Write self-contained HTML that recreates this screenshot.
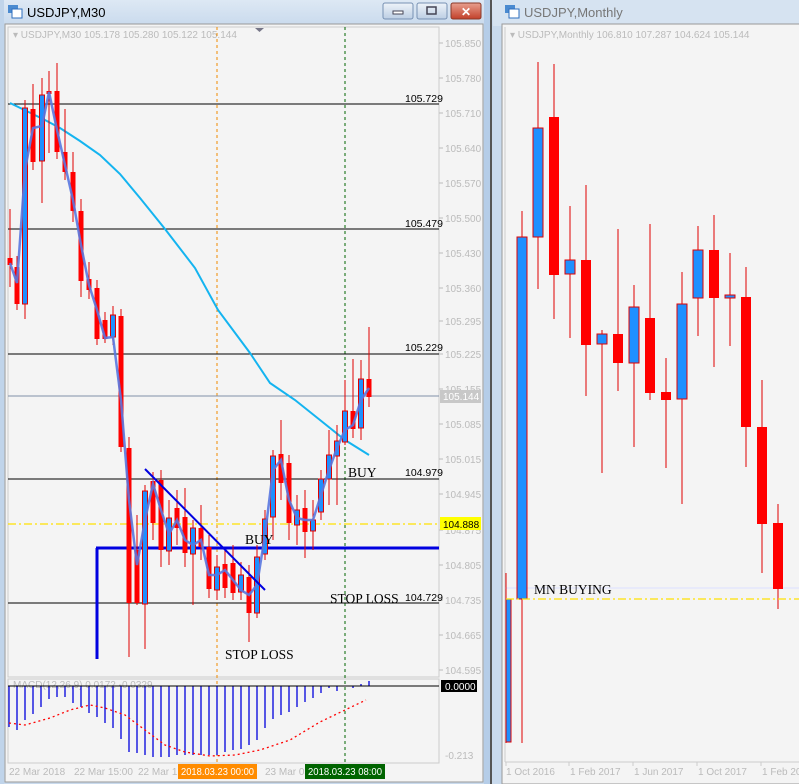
<!DOCTYPE html>
<html><head><meta charset="utf-8"><style>
html,body{margin:0;padding:0;background:#f4f4f4;overflow:hidden}
svg{display:block;font-family:"Liberation Sans",sans-serif}
</style></head><body>
<svg width="799" height="784" viewBox="0 0 799 784" xmlns="http://www.w3.org/2000/svg">
<defs>
<linearGradient id="tb" x1="0" y1="0" x2="0" y2="1"><stop offset="0" stop-color="#dde8f4"/><stop offset="1" stop-color="#c9daed"/></linearGradient>
<linearGradient id="bt" x1="0" y1="0" x2="0" y2="1"><stop offset="0" stop-color="#eef3f9"/><stop offset="1" stop-color="#bccee4"/></linearGradient>
<linearGradient id="rb" x1="0" y1="0" x2="0" y2="1"><stop offset="0" stop-color="#e8a08f"/><stop offset="1" stop-color="#c2402a"/></linearGradient>
</defs>
<rect x="0" y="0" width="799" height="784" fill="#c9daed"/>
<rect x="0" y="0" width="493" height="26" fill="url(#tb)"/>
<rect x="493" y="0" width="306" height="26" fill="#d6e3f1"/>
<rect x="490" y="0" width="2" height="784" fill="#555"/>
<rect x="484" y="0" width="6" height="784" fill="#b5cde8"/>
<rect x="0" y="0" width="4" height="784" fill="#c0d4ea"/>
<g><rect x="8" y="5" width="10" height="8" fill="#4a8ad0"/><rect x="12" y="9" width="10" height="9" fill="#fff" stroke="#2e6fbf"/></g>
<text x="27" y="17" font-size="13" fill="#000">USDJPY,M30</text>
<rect x="383" y="3" width="30" height="16" rx="2" fill="url(#bt)" stroke="#7791b3"/>
<rect x="393" y="11" width="10" height="3" fill="#fff" stroke="#445"/>
<rect x="417" y="3" width="30" height="16" rx="2" fill="url(#bt)" stroke="#7791b3"/>
<rect x="427" y="7" width="9" height="7" fill="none" stroke="#445" stroke-width="1.5"/>
<rect x="451" y="3" width="30" height="16" rx="2" fill="url(#rb)" stroke="#8a3a2a"/>
<text x="466" y="16" font-size="12" font-weight="bold" fill="#fff" text-anchor="middle">✕</text>
<rect x="5" y="24" width="478" height="758" fill="#f4f4f4" stroke="#999"/>
<rect x="8" y="27" width="431" height="650" fill="none" stroke="#ccc"/>
<rect x="8" y="679" width="431" height="84" fill="none" stroke="#ccc"/>
<text x="13" y="38" font-size="10" fill="#bbb">▾ USDJPY,M30  105.178 105.280 105.122 105.144</text>
<path d="M255 28 h9 l-4.5 4z" fill="#778"/>
<g font-size="10" fill="#bbb">
<text x="445" y="47">105.850</text><text x="445" y="82">105.780</text><text x="445" y="117">105.710</text><text x="445" y="152">105.640</text><text x="445" y="187">105.570</text><text x="445" y="222">105.500</text><text x="445" y="257">105.430</text><text x="445" y="292">105.360</text><text x="445" y="325">105.295</text><text x="445" y="358">105.225</text><text x="445" y="393">105.155</text><text x="445" y="428">105.085</text><text x="445" y="463">105.015</text><text x="445" y="498">104.945</text><text x="445" y="534">104.875</text><text x="445" y="569">104.805</text><text x="445" y="604">104.735</text><text x="445" y="639">104.665</text><text x="445" y="674">104.595</text>
<text x="445" y="759">-0.213</text>
</g>
<g stroke="#bbb"><path d="M439 43h4M439 78h4M439 113h4M439 148h4M439 183h4M439 218h4M439 253h4M439 288h4M439 321h4M439 354h4M439 389h4M439 424h4M439 459h4M439 494h4M439 530h4M439 565h4M439 600h4M439 635h4M439 670h4"/></g>
<line x1="217" y1="27" x2="217" y2="763" stroke="#f08a00" stroke-dasharray="3,3"/>
<line x1="345" y1="27" x2="345" y2="763" stroke="#006400" stroke-dasharray="3,3"/>
<g stroke="#000" stroke-width="1"><line x1="8" y1="104" x2="439" y2="104"/><line x1="8" y1="229" x2="439" y2="229"/><line x1="8" y1="354" x2="439" y2="354"/><line x1="8" y1="479" x2="439" y2="479"/><line x1="8" y1="603" x2="439" y2="603"/></g>
<g font-size="10.5" fill="#000"><text x="405" y="102">105.729</text><text x="405" y="227">105.479</text><text x="405" y="351">105.229</text><text x="405" y="476">104.979</text><text x="405" y="601">104.729</text></g>
<line x1="8" y1="396" x2="439" y2="396" stroke="#8090a8"/>
<rect x="440" y="390" width="41" height="13" fill="#c8c8c8"/><text x="443" y="400" font-size="10" fill="#fff">105.144</text>
<line x1="8" y1="524" x2="439" y2="524" stroke="#ffe000" stroke-width="1.3" stroke-dasharray="8,3,2,3"/>
<rect x="440" y="517" width="41" height="13" fill="#ffff00"/><text x="443" y="528" font-size="10" fill="#000">104.888</text>
<line x1="96" y1="548" x2="439" y2="548" stroke="#0000e0" stroke-width="3"/>
<line x1="97" y1="548" x2="97" y2="659" stroke="#0000e0" stroke-width="3"/>
<polyline fill="none" stroke="#14b4f0" stroke-width="2" points="10,103 45,120 60,128 80,141 100,155 120,174 140,198 165,229 195,268 218,310 250,353 270,383 295,400 320,420 345,440 369,455"/>
<g stroke="#e00000" stroke-width="1">
<line x1="10" y1="209" x2="10" y2="287"/><line x1="17" y1="256" x2="17" y2="310"/><line x1="25" y1="100" x2="25" y2="319"/><line x1="33" y1="84" x2="33" y2="170"/><line x1="42" y1="78" x2="42" y2="203"/><line x1="49" y1="71" x2="49" y2="153"/><line x1="57" y1="63" x2="57" y2="159"/><line x1="65" y1="109" x2="65" y2="180"/><line x1="73" y1="152" x2="73" y2="222"/><line x1="81" y1="199" x2="81" y2="297"/><line x1="89" y1="262" x2="89" y2="299"/><line x1="97" y1="280" x2="97" y2="345"/><line x1="105" y1="312" x2="105" y2="343"/><line x1="113" y1="306" x2="113" y2="345"/><line x1="121" y1="309" x2="121" y2="452"/><line x1="129" y1="437" x2="129" y2="657"/><line x1="137" y1="515" x2="137" y2="605"/><line x1="145" y1="485" x2="145" y2="649"/><line x1="153" y1="472" x2="153" y2="540"/><line x1="161" y1="470" x2="161" y2="567"/><line x1="169" y1="500" x2="169" y2="565"/><line x1="177" y1="490" x2="177" y2="545"/><line x1="185" y1="488" x2="185" y2="567"/><line x1="193" y1="520" x2="193" y2="605"/><line x1="201" y1="505" x2="201" y2="560"/><line x1="209" y1="535" x2="209" y2="598"/><line x1="217" y1="555" x2="217" y2="600"/><line x1="225" y1="550" x2="225" y2="598"/><line x1="233" y1="545" x2="233" y2="600"/><line x1="241" y1="562" x2="241" y2="600"/><line x1="249" y1="565" x2="249" y2="642"/><line x1="257" y1="545" x2="257" y2="618"/><line x1="265" y1="510" x2="265" y2="560"/><line x1="273" y1="450" x2="273" y2="540"/><line x1="281" y1="420" x2="281" y2="500"/><line x1="289" y1="455" x2="289" y2="540"/><line x1="297" y1="495" x2="297" y2="545"/><line x1="305" y1="490" x2="305" y2="558"/><line x1="313" y1="500" x2="313" y2="550"/><line x1="321" y1="470" x2="321" y2="520"/><line x1="329" y1="430" x2="329" y2="505"/><line x1="337" y1="425" x2="337" y2="505"/><line x1="345" y1="380" x2="345" y2="445"/><line x1="353" y1="359" x2="353" y2="438"/><line x1="361" y1="360" x2="361" y2="440"/><line x1="369" y1="327" x2="369" y2="407"/>
</g>
<g fill="#ff0000">
<rect x="7.5" y="258" width="5" height="7"/><rect x="14.5" y="267" width="5" height="37"/><rect x="30.5" y="109" width="5" height="53"/><rect x="46.5" y="91" width="5" height="3"/><rect x="54.5" y="91" width="5" height="61"/><rect x="62.5" y="152" width="5" height="20"/><rect x="70.5" y="172" width="5" height="39"/><rect x="78.5" y="211" width="5" height="70"/><rect x="86.5" y="279" width="5" height="11"/><rect x="94.5" y="288" width="5" height="51"/><rect x="102.5" y="320" width="5" height="19"/><rect x="118.5" y="316" width="5" height="131"/><rect x="126.5" y="448" width="5" height="155"/><rect x="134.5" y="550" width="5" height="53"/><rect x="150.5" y="481" width="5" height="42"/><rect x="158.5" y="480" width="5" height="70"/><rect x="174.5" y="508" width="5" height="20"/><rect x="182.5" y="517" width="5" height="36"/><rect x="198.5" y="528" width="5" height="19"/><rect x="206.5" y="547" width="5" height="42"/><rect x="222.5" y="564" width="5" height="24"/><rect x="230.5" y="563" width="5" height="30"/><rect x="246.5" y="577" width="5" height="36"/><rect x="278.5" y="454" width="5" height="29"/><rect x="286.5" y="463" width="5" height="60"/><rect x="302.5" y="508" width="5" height="24"/><rect x="350.5" y="411" width="5" height="18"/><rect x="366.5" y="379" width="5" height="18"/>
</g>
<g fill="#1e90ff" stroke="#e00000" stroke-width="1">
<rect x="22.5" y="108" width="5" height="196"/><rect x="39.5" y="95" width="5" height="66"/><rect x="110.5" y="315" width="5" height="22"/><rect x="142.5" y="491" width="5" height="113"/><rect x="166.5" y="518" width="5" height="33"/><rect x="190.5" y="528" width="5" height="26"/><rect x="214.5" y="567" width="5" height="23"/><rect x="238.5" y="575" width="5" height="17"/><rect x="254.5" y="557" width="5" height="56"/><rect x="262.5" y="519" width="5" height="35"/><rect x="270.5" y="456" width="5" height="61"/><rect x="294.5" y="510" width="5" height="15"/><rect x="310.5" y="520" width="5" height="11"/><rect x="318.5" y="479" width="5" height="33"/><rect x="326.5" y="455" width="5" height="24"/><rect x="334.5" y="441" width="5" height="15"/><rect x="342.5" y="411" width="5" height="31"/><rect x="358.5" y="379" width="5" height="49"/>
</g>
<polyline fill="none" stroke="#5a78e0" stroke-width="2.5" stroke-opacity="0.9" points="10,263 17,283 25,170 33,128 42,126 49,92 57,130 65,165 73,200 81,245 89,285 97,310 105,338 113,337 121,400 129,500 137,565 145,520 153,484 161,510 169,534 177,520 185,540 193,545 201,540 209,575 217,575 225,570 233,580 241,590 249,595 257,585 265,535 273,470 281,460 289,500 297,518 305,520 313,520 321,495 329,470 337,448 345,430 353,425 361,400 369,388"/>
<line x1="145" y1="469" x2="265" y2="590" stroke="#0000e0" stroke-width="2"/>
<g font-family="Liberation Serif,serif" font-size="13.5" fill="#000">
<text x="348" y="477">BUY</text><text x="245" y="544">BUY</text><text x="330" y="603">STOP LOSS</text><text x="225" y="659">STOP LOSS</text>
</g>
<text x="13" y="688" font-size="10" fill="#bbb">MACD(12,26,9) 0.0172 -0.0329</text>
<g stroke="#0000dd" stroke-width="1.3">
<line x1="9" y1="686" x2="9" y2="727"/><line x1="17" y1="686" x2="17" y2="730"/><line x1="25" y1="686" x2="25" y2="720"/><line x1="33" y1="686" x2="33" y2="714"/><line x1="41" y1="686" x2="41" y2="707"/><line x1="49" y1="686" x2="49" y2="699"/><line x1="57" y1="686" x2="57" y2="697"/><line x1="65" y1="686" x2="65" y2="697"/><line x1="73" y1="686" x2="73" y2="703"/><line x1="81" y1="686" x2="81" y2="707"/><line x1="89" y1="686" x2="89" y2="713"/><line x1="97" y1="686" x2="97" y2="717"/><line x1="105" y1="686" x2="105" y2="723"/><line x1="113" y1="686" x2="113" y2="728"/><line x1="121" y1="686" x2="121" y2="739"/><line x1="129" y1="686" x2="129" y2="752"/><line x1="137" y1="686" x2="137" y2="753"/><line x1="145" y1="686" x2="145" y2="755"/><line x1="153" y1="686" x2="153" y2="757"/><line x1="161" y1="686" x2="161" y2="757"/><line x1="169" y1="686" x2="169" y2="757"/><line x1="177" y1="686" x2="177" y2="755"/><line x1="185" y1="686" x2="185" y2="755"/><line x1="193" y1="686" x2="193" y2="755"/><line x1="201" y1="686" x2="201" y2="755"/><line x1="209" y1="686" x2="209" y2="755"/><line x1="217" y1="686" x2="217" y2="755"/><line x1="225" y1="686" x2="225" y2="752"/><line x1="233" y1="686" x2="233" y2="750"/><line x1="241" y1="686" x2="241" y2="749"/><line x1="249" y1="686" x2="249" y2="745"/><line x1="257" y1="686" x2="257" y2="740"/><line x1="265" y1="686" x2="265" y2="728"/><line x1="273" y1="686" x2="273" y2="719"/><line x1="281" y1="686" x2="281" y2="715"/><line x1="289" y1="686" x2="289" y2="712"/><line x1="297" y1="686" x2="297" y2="707"/><line x1="305" y1="686" x2="305" y2="702"/><line x1="313" y1="686" x2="313" y2="698"/><line x1="321" y1="686" x2="321" y2="693"/><line x1="329" y1="686" x2="329" y2="688"/><line x1="337" y1="686" x2="337" y2="691"/><line x1="353" y1="686" x2="353" y2="688"/><line x1="361" y1="686" x2="361" y2="684"/><line x1="369" y1="686" x2="369" y2="681"/>
</g>
<line x1="8" y1="686" x2="439" y2="686" stroke="#000"/>
<rect x="441" y="680" width="36" height="12" fill="#000"/><text x="445" y="690" font-size="10" fill="#fff">0.0000</text>
<polyline fill="none" stroke="#ff0000" stroke-width="1.3" stroke-dasharray="2,3" points="9,723 25,725 50,718 70,710 90,705 105,708 125,715 145,730 165,745 185,752 210,756 235,755 260,750 290,740 320,722 345,710 366,700"/>
<g font-size="10" fill="#bbb"><text x="9" y="775">22 Mar 2018</text><text x="74" y="775">22 Mar 15:00</text><text x="138" y="775">22 Mar 19</text><text x="265" y="775">23 Mar 03</text></g>
<rect x="178" y="764" width="79" height="15" fill="#ff8c00"/><text x="181" y="775" font-size="10.5" fill="#fff" textLength="73" lengthAdjust="spacingAndGlyphs">2018.03.23 00:00</text>
<rect x="305" y="764" width="80" height="15" fill="#006400"/><text x="308" y="775" font-size="10.5" fill="#fff" textLength="74" lengthAdjust="spacingAndGlyphs">2018.03.23 08:00</text>
<g><rect x="505" y="5" width="10" height="8" fill="#4a8ad0"/><rect x="509" y="9" width="10" height="9" fill="#fff" stroke="#2e6fbf"/></g>
<text x="524" y="17" font-size="13" fill="#777">USDJPY,Monthly</text>
<rect x="502" y="24" width="300" height="760" fill="#f4f4f4" stroke="#999"/>
<line x1="505" y1="27" x2="505" y2="762" stroke="#ccc"/>
<line x1="505" y1="762" x2="799" y2="762" stroke="#ccc"/>
<text x="510" y="38" font-size="10" fill="#bbb">▾ USDJPY,Monthly  106.810 107.287 104.624 105.144</text>
<line x1="505" y1="588" x2="799" y2="588" stroke="#dde0ff"/>
<g stroke="#e00000" stroke-width="1">
<line x1="506" y1="573" x2="506" y2="743"/><line x1="522" y1="211" x2="522" y2="743"/><line x1="538" y1="62" x2="538" y2="289"/><line x1="554" y1="64" x2="554" y2="319"/><line x1="570" y1="206" x2="570" y2="338"/><line x1="586" y1="185" x2="586" y2="396"/><line x1="602" y1="330" x2="602" y2="473"/><line x1="618" y1="229" x2="618" y2="391"/><line x1="634" y1="285" x2="634" y2="447"/><line x1="650" y1="224" x2="650" y2="400"/><line x1="666" y1="358" x2="666" y2="468"/><line x1="682" y1="272" x2="682" y2="504"/><line x1="698" y1="226" x2="698" y2="336"/><line x1="714" y1="215" x2="714" y2="367"/><line x1="730" y1="253" x2="730" y2="346"/><line x1="746" y1="267" x2="746" y2="467"/><line x1="762" y1="380" x2="762" y2="573"/><line x1="778" y1="504" x2="778" y2="609"/>
</g>
<g fill="#ff0000">
<rect x="549" y="117" width="10" height="158"/><rect x="581" y="260" width="10" height="85"/><rect x="613" y="334" width="10" height="29"/><rect x="645" y="318" width="10" height="75"/><rect x="661" y="392" width="10" height="8"/><rect x="709" y="250" width="10" height="48"/><rect x="741" y="297" width="10" height="130"/><rect x="757" y="427" width="10" height="97"/><rect x="773" y="523" width="10" height="66"/>
</g>
<g fill="#1e90ff" stroke="#e00000" stroke-width="1">
<rect x="506" y="599" width="5" height="143"/><rect x="517" y="237" width="10" height="362"/><rect x="533" y="128" width="10" height="109"/><rect x="565" y="260" width="10" height="14"/><rect x="597" y="334" width="10" height="10"/><rect x="629" y="307" width="10" height="56"/><rect x="677" y="304" width="10" height="95"/><rect x="693" y="250" width="10" height="48"/><rect x="725" y="295" width="10" height="3"/>
</g>
<line x1="506" y1="599" x2="799" y2="599" stroke="#ffe000" stroke-width="1.3" stroke-dasharray="8,3,2,3"/>
<text x="534" y="594" font-family="Liberation Serif,serif" font-size="13.5" fill="#000">MN BUYING</text>
<g stroke="#ccc"><path d="M506 762v4M569 762v4M633 762v4M697 762v4M761 762v4"/></g>
<g font-size="10" fill="#bbb"><text x="506" y="775">1 Oct 2016</text><text x="570" y="775">1 Feb 2017</text><text x="634" y="775">1 Jun 2017</text><text x="698" y="775">1 Oct 2017</text><text x="762" y="775">1 Feb 20</text></g>
</svg>
</body></html>
